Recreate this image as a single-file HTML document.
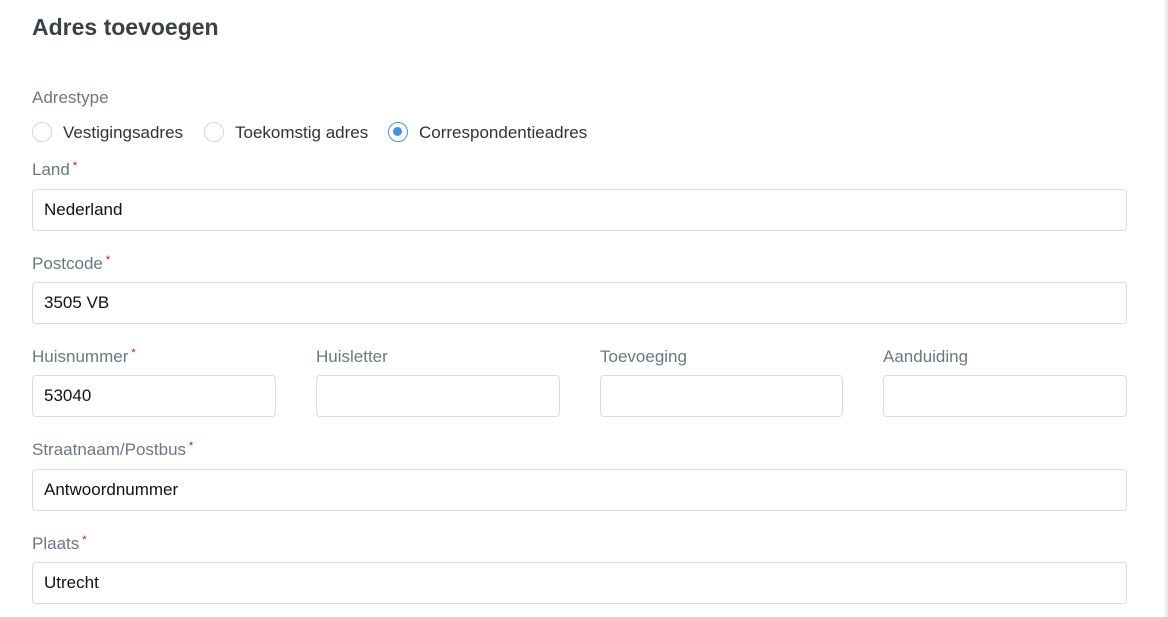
<!DOCTYPE html>
<html><head><style>
body{margin:0;width:1168px;height:617px;background:#fff;font-family:"Liberation Sans",sans-serif;position:relative;overflow:hidden}
.a{position:absolute}
h1{position:absolute;left:32px;top:11px;margin:0;font-size:23px;font-weight:bold;color:#3b4149;line-height:32px}
.l{position:absolute;font-size:17px;color:#6b7785;line-height:20px}
.l sup{color:#d0021b;font-size:11px;vertical-align:top;position:relative;top:-4px;margin-left:3px}
.i{position:absolute;border:1px solid #dcdcdc;border-radius:4px;box-sizing:border-box;height:42px;font-size:17px;color:#111;padding-left:11px;line-height:40px}
.r{position:absolute;top:122px;width:20px;height:20px;border:1px solid #d6d6d6;border-radius:50%;box-sizing:border-box}
.rt{position:absolute;top:122px;font-size:17px;color:#333;line-height:22px}
</style></head><body>
<div class="a" style="left:1165px;top:0;width:3px;height:617px;background:#ececec"></div>
<h1>Adres toevoegen</h1>
<div class="l" style="left:32px;top:88px">Adrestype</div>
<div class="r" style="left:32px"></div><div class="rt" style="left:63px">Vestigingsadres</div>
<div class="r" style="left:204px"></div><div class="rt" style="left:235px">Toekomstig adres</div>
<div class="r" style="left:388px;border:1.5px solid #4a90e2"><div class="a" style="left:4px;top:4px;width:9px;height:9px;border-radius:50%;background:#4a90e2"></div></div><div class="rt" style="left:419px">Correspondentieadres</div>
<div class="l" style="left:32px;top:160px">Land<sup>*</sup></div>
<div class="i" style="left:32px;top:189px;width:1095px">Nederland</div>
<div class="l" style="left:32px;top:254px">Postcode<sup>*</sup></div>
<div class="i" style="left:32px;top:282px;width:1095px">3505 VB</div>
<div class="l" style="left:32px;top:347px">Huisnummer<sup>*</sup></div>
<div class="l" style="left:316px;top:347px">Huisletter</div>
<div class="l" style="left:600px;top:347px">Toevoeging</div>
<div class="l" style="left:883px;top:347px">Aanduiding</div>
<div class="i" style="left:32px;top:375px;width:244px">53040</div>
<div class="i" style="left:316px;top:375px;width:244px"></div>
<div class="i" style="left:600px;top:375px;width:243px"></div>
<div class="i" style="left:883px;top:375px;width:244px"></div>
<div class="l" style="left:32px;top:440px">Straatnaam/Postbus<sup>*</sup></div>
<div class="i" style="left:32px;top:469px;width:1095px">Antwoordnummer</div>
<div class="l" style="left:32px;top:534px">Plaats<sup>*</sup></div>
<div class="i" style="left:32px;top:562px;width:1095px">Utrecht</div>
</body></html>
